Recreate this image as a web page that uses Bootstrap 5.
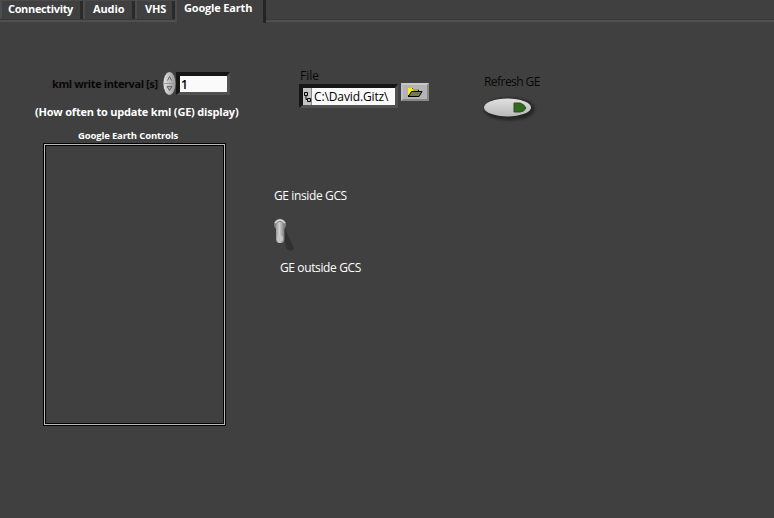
<!DOCTYPE html>
<html lang="en">
<head>
<meta charset="utf-8">
<meta name="viewport" content="width=device-width, initial-scale=1">
<title>Google Earth</title>
<link href="https://cdn.jsdelivr.net/npm/bootstrap@5.3.0/dist/css/bootstrap.min.css" rel="stylesheet">
<style>
body{background:#404040;font:12px/16px "Open Sans","Noto Sans",sans-serif;height:518px;overflow:hidden;color:#fff}
.tabbar{height:23px;background:linear-gradient(#404040 19px,#383838 19px,#383838 20px,#505050 20px,#505050 22px,#404040 22px)}
.tabbar .nav-link{color:#fff;font-size:11px;line-height:16px;letter-spacing:-.35px;font-weight:700;padding:1px 0 0 8px;height:19px;border:0;border-radius:0;white-space:nowrap;background:#404040;box-shadow:inset 2px 0 #4c4c4c,inset 0 1px #4a4a4a,inset -3px 0 #2a2a2a}
.tabbar .nav-link.active{color:#fff;letter-spacing:-.17px;background:#404040;padding:1px 0 0 9px;margin-top:-1px;height:24px;box-shadow:inset 2px 0 #4c4c4c,inset -3px 0 #242424}
.t1{width:83px}.tabbar .t2{width:52px;padding-left:10px;letter-spacing:-.1px}.tabbar .t3{width:40px;padding-left:10px;letter-spacing:-.2px}.t4{width:91px}
.lbl{white-space:nowrap;display:block}
.ink{color:#080808}
.col-a{width:204px;margin-left:35px;padding-top:48px}
.col-b{width:175px;margin-left:35px;padding-top:45px}
.col-c{margin-left:35px;padding-top:51px}
.well{border:solid;border-width:4px 3px 3px 4px;border-color:#161616 #525252 #525252 #161616;background:#fafafa}
.num{width:54px;height:23px;padding:1px 0 0 1px;color:#000;font:600 12px/15px "Open Sans",sans-serif;border-radius:0}
.num:not(:focus){color:#000}
.path{width:99px;height:24px}
.path input{width:80px;padding:0 0 0 2px;color:#000;font:12px/17px "Open Sans",sans-serif;letter-spacing:-.12px;border:0;background:none}
.grip{width:9px;background:#c4c4c4;border-right:1px solid #888}
.browse{width:28px;height:18px;padding:0;border:2px solid;border-color:#c8c8c8 #888 #888 #c0c0c0;border-radius:0;background:#b4b4b4;line-height:0}
.frame{width:183px;height:283px;margin-left:8px;border:1px solid #000;background:#bcbcbc;padding:1px}
.frame>div{height:100%;border:1px solid #000;background:#404040}
svg{display:block;flex:none}
#kml{margin-left:17px;width:111px;font-size:11px;letter-spacing:-.4px}
#how{margin-top:8px;font-size:11px;letter-spacing:-.2px}
#gec{margin:8px 0 -1px 43px;font-size:9.5px;letter-spacing:-.15px}
#filegrp{margin-left:25px}
#file{margin-left:1px}
.browse{margin:-1px 0 0 3px}
#in,#out{font-size:12px;letter-spacing:-.38px}
#in{margin-top:80px}
#toggle{margin-top:14px;margin-left:-1px}
#out{margin:7px 0 0 6px}
#ref{font-size:12px;letter-spacing:-.55px}
#pill{margin-top:6px;margin-left:-1px}
</style>
<script src="https://cdn.jsdelivr.net/npm/bootstrap@5.3.0/dist/js/bootstrap.bundle.min.js"></script>
</head>
<body>
<nav class="nav tabbar flex-nowrap">
<a class="nav-link t1">Connectivity</a>
<a class="nav-link t2">Audio</a>
<a class="nav-link t3">VHS</a>
<a class="nav-link active t4">Google Earth</a>
</nav>
<main class="d-flex">
<section class="col-a">
<div class="d-flex align-items-center">
<span class="lbl ink fw-bold" id="kml">kml write interval [s]</span>
<svg width="13" height="25" viewBox="0 0 13 25"><defs><linearGradient id="m"><stop stop-color="#e6e6e6"/><stop offset="1" stop-color="#969696"/></linearGradient></defs><ellipse cx="6.5" cy="12.500" rx="6.400" ry="11.800" fill="url(#m)" stroke="#303030" stroke-width=".5"/><path d="M1 12.500h11" stroke="#999"/><path d="M4.500 9.500 6.500 5.500 8.500 9.500" fill="none" stroke="#666"/><path d="M4 15.500h5l-2.500 4z" fill="#aaa" stroke="#666"/></svg>
<input class="form-control well num" value="1">
</div>
<span class="lbl fw-bold" id="how">(How often to update kml (GE) display)</span>
<span class="lbl fw-bold" id="gec">Google Earth Controls</span>
<div class="frame"><div></div></div>
</section>
<section class="col-b">
<div id="filegrp">
<span class="lbl ink" id="file">File</span>
<div class="d-flex">
<div class="d-flex well path"><span class="grip d-flex align-items-center justify-content-center"><svg width="7" height="11" viewBox="0 0 7 11"><path d="M.5 1.500h3v3h-3zM3.500 7.500h3v3h-3zM2 4.500v4h1" fill="none" stroke="#000"/></svg></span><input value="C:\David.Gitz\"></div>
<button class="btn browse d-flex align-items-center justify-content-center" aria-label="Browse"><svg width="16" height="11" viewBox="0 0 16 11"><path d="M1.500 10V1.500h4l1 1.500h5v2" fill="#f4ec20" stroke="#000"/><path d="M1.500 9.500l3-5h10.500l-3 5z" fill="#77775a" stroke="#000"/><path d="M1 1.500h4l1 1.500h5M1.500 1v7" fill="none" stroke="#f4ec20"/></svg></button>
</div>
</div>
<span class="lbl" id="in">GE inside GCS</span>
<svg id="toggle" width="24" height="35" viewBox="0 0 24 35"><defs><linearGradient id="n"><stop stop-color="#999"/><stop offset=".4" stop-color="#d0d0d0"/><stop offset="1" stop-color="#777"/></linearGradient></defs><path d="M7 10 14 31q5 4 7-1L12 11z" fill="#303030"/><ellipse cx="7" cy="6.500" rx="6" ry="5.800" fill="#858585"/><path d="M2 5q5-6 10 0" fill="none" stroke="#ddd" stroke-width="1.300"/><rect x="3" y="4" width="8.500" height="21" rx="4" fill="url(#n)"/><ellipse cx="7" cy="20.500" rx="3" ry="3" fill="#c4c4c4"/></svg>
<span class="lbl" id="out">GE outside GCS</span>
</section>
<section class="col-c">
<span class="lbl ink" id="ref">Refresh GE</span>
<svg id="pill" width="56" height="30" viewBox="0 0 56 30"><defs><linearGradient id="p" x2="0" y2="1"><stop stop-color="#e0e0e0"/><stop offset="1" stop-color="#b8b8b8"/></linearGradient><filter id="f"><feGaussianBlur stdDeviation="1.200"/></filter></defs><ellipse cx="26.500" cy="13" rx="25.500" ry="11.500" fill="#282828" filter="url(#f)"/><ellipse cx="24.500" cy="11.500" rx="23.500" ry="9" fill="url(#p)"/><path d="M31 7h6q4 1 6 5-2 4-6 4h-6z" fill="#326820" stroke="#285218"/></svg>
</section>
</main>
</body>
</html>
